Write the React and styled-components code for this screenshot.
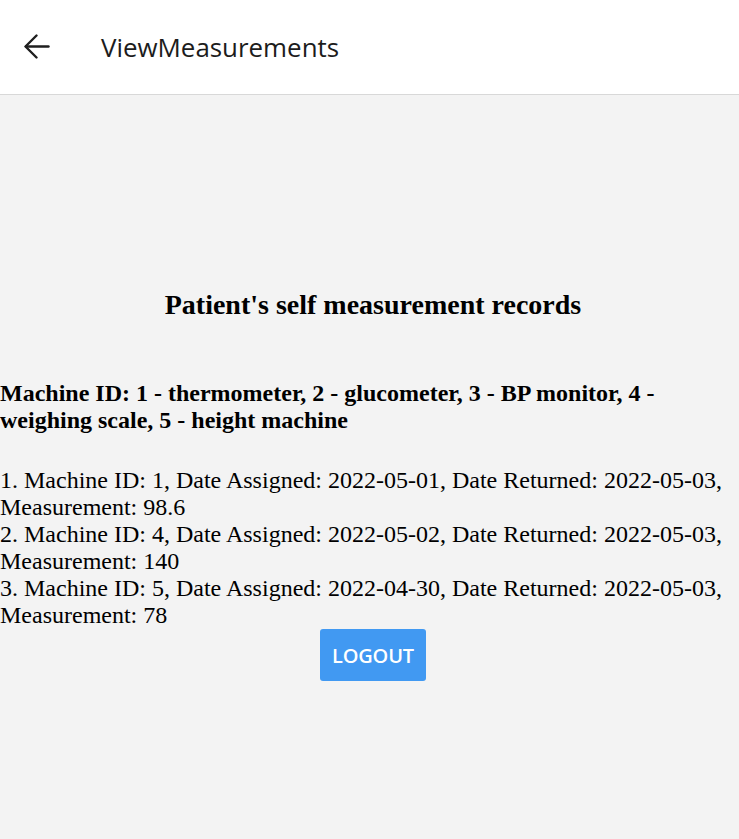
import React from "react";
import styled, { createGlobalStyle } from "styled-components";

const Global = createGlobalStyle`
  html, body { margin: 0; padding: 0; height: 100%; }
  body { background: #f3f3f3; font-family: "Liberation Serif", "Times New Roman", serif; }
  #root { min-height: 100vh; display: flex; flex-direction: column; }
`;

const Header = styled.header`
  height: 95px;
  box-sizing: border-box;
  background: #ffffff;
  border-bottom: 1px solid #d8d8d8;
  display: flex;
  align-items: center;
  padding-left: 24px;
  padding-bottom: 1px;
`;

const BackButton = styled.button`
  width: 26px;
  height: 25px;
  padding: 0;
  border: none;
  background: transparent;
  display: flex;
  align-items: center;
  justify-content: center;
  margin-right: 51px;
  color: #1f1f1f;
`;

const Title = styled.h1`
  margin: 0;
  font-family: "Open Sans", "Noto Sans", sans-serif;
  font-weight: 500;
  font-size: 25.9px;
  color: #1c1c1c;
`;

const Body = styled.main`
  flex: 1;
  display: flex;
  flex-direction: column;
  padding-top: 194px;
`;

const Heading = styled.h2`
  margin: 0 0 59px 7px;
  text-align: center;
  font-size: 28px;
  line-height: 32px;
  font-weight: bold;
  color: #000;
`;

const Legend = styled.p`
  margin: 0 0 33px;
  font-size: 24px;
  line-height: 27px;
  font-weight: bold;
  color: #000;
`;

const Record = styled.div`
  font-size: 24px;
  line-height: 27px;
  color: #000;
`;

const Logout = styled.button`
  align-self: center;
  margin: 0 0 0 7px;
  width: 106px;
  height: 52px;
  border: none;
  border-radius: 3px;
  background: #4199f2;
  color: #fff;
  font-family: "Open Sans", "Noto Sans", sans-serif;
  font-weight: 600;
  font-size: 20px;
  letter-spacing: -0.2px;
  padding-top: 2px;
`;

const records = [
  { id: 1, assigned: "2022-05-01", returned: "2022-05-03", m: "98.6" },
  { id: 4, assigned: "2022-05-02", returned: "2022-05-03", m: "140" },
  { id: 5, assigned: "2022-04-30", returned: "2022-05-03", m: "78" },
];

export default function App() {
  return (
    <>
      <Global />
      <Header>
        <BackButton aria-label="back">
          <svg width="26" height="25" viewBox="0 0 26 25" fill="none" stroke="currentColor" strokeWidth="2.4" strokeLinecap="round" strokeLinejoin="round">
            <path d="M2 12.5H24.5" />
            <path d="M12.5 1.5L1.5 12.5L12.5 23.5" />
          </svg>
        </BackButton>
        <Title>ViewMeasurements</Title>
      </Header>
      <Body>
        <Heading>Patient's self measurement records</Heading>
        <Legend>
          Machine ID: 1 - thermometer, 2 - glucometer, 3 - BP monitor, 4 - weighing scale, 5 - height machine
        </Legend>
        {records.map((r, i) => (
          <Record key={i}>
            {i + 1}. Machine ID: {r.id}, Date Assigned: {r.assigned}, Date Returned: {r.returned}, Measurement: {r.m}
          </Record>
        ))}
        <Logout>LOGOUT</Logout>
      </Body>
    </>
  );
}
